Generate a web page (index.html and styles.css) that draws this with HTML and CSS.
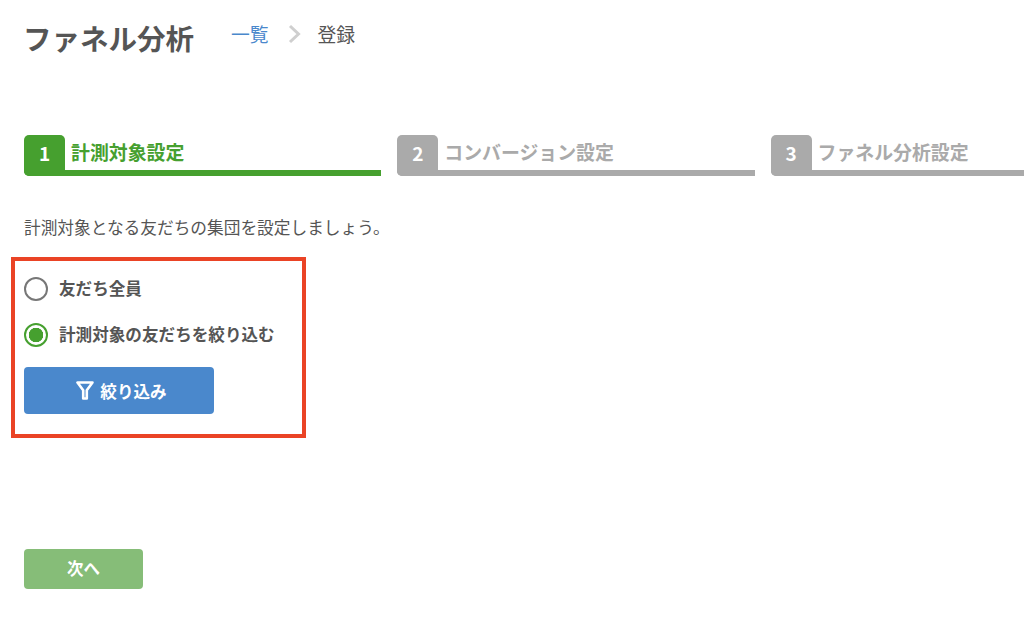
FILE: index.html
```html
<!DOCTYPE html>
<html lang="ja">
<head>
    <meta charset="UTF-8">
    <meta name="viewport" content="width=device-width, initial-scale=1.0">
    <title>ファネル分析</title>
    <link rel="stylesheet" href="styles.css">
</head>
<body>

<div class="container">
    <div class="header">
        <h1>ファネル分析</h1>
        <div class="breadcrumb">
            <a href="#">一覧</a>
            <svg class="chevron" width="13" height="20" viewBox="0 0 13 20"><path d="M2 2l8.5 8L2 18" fill="none" stroke="#cfcfcf" stroke-width="3"/></svg>
            <span>登録</span>
        </div>
    </div>

    <!-- ステップ -->
    <div class="steps">
        <div class="step active"><span class="step-num">1</span><span class="step-label">計測対象設定</span></div>
        <div class="step"><span class="step-num">2</span><span class="step-label">コンバージョン設定</span></div>
        <div class="step"><span class="step-num">3</span><span class="step-label">ファネル分析設定</span></div>
    </div>

    <p class="lead">計測対象となる友だちの集団を設定しましょう。</p>

    <div class="target-box">
        <label class="radio"><span class="radio-mark"></span>友だち全員</label>
        <label class="radio checked"><span class="radio-mark"></span>計測対象の友だちを絞り込む</label>
        <button class="btn-filter" type="button">
            <svg width="18" height="19" viewBox="0 0 18 19"><path d="M1.5 1.5h15L10.8 9.2v8.3H7.2V9.2z" fill="none" stroke="#fff" stroke-width="2.6" stroke-linejoin="round"/></svg>
            絞り込み
        </button>
    </div>

    <button class="btn-next" type="button">次へ</button>
</div>

</body>
</html>
```

FILE: styles.css
```css
html, body {
    margin: 0;
    padding: 0;
    height: 100%;
    overflow: hidden;
    background-color: #fff;
}
body {
    font-family: "Noto Sans CJK JP", "Noto Sans", sans-serif;
    color: #555;
}
.container {
    padding: 0 0 0 24px;
}
.header {
    display: flex;
    align-items: flex-start;
    height: 135px;
}
.header h1 {
    margin: 17px 0 0 -1px;
    font-size: 28.5px;
    line-height: 42px;
    font-weight: 700;
    color: #555;
}
.breadcrumb {
    display: flex;
    align-items: center;
    margin: 20px 0 0 37px;
    font-size: 18.8px;
    line-height: 28px;
}
.breadcrumb a {
    color: #4a88cc;
    text-decoration: none;
}
.breadcrumb .chevron {
    margin: 0 17px 0 19px;
}
.steps {
    display: flex;
    gap: 16px;
    overflow: hidden;
}
.step {
    flex: 0 0 357.25px;
    height: 41px;
    display: flex;
    align-items: flex-start;
    box-sizing: border-box;
    border-bottom: 6px solid #aaa;
    border-bottom-left-radius: 5px;
    color: #aaa;
}
.step-num {
    width: 41px;
    height: 41px;
    flex: none;
    background-color: #aaa;
    color: #fff;
    border-radius: 5px 5px 0 5px;
    font-size: 19px;
    font-weight: 700;
    line-height: 35px;
    text-align: center;
}
.step-label {
    margin-left: 6px;
    font-size: 18.9px;
    font-weight: 700;
    line-height: 34px;
}
.step.active {
    border-bottom-color: #46a02f;
    color: #46a02f;
}
.step.active .step-num {
    background-color: #46a02f;
}
.lead {
    margin: 38px 0 0;
    font-size: 16.7px;
    line-height: 26px;
}
.target-box {
    box-sizing: border-box;
    width: 295px;
    height: 181px;
    margin: 17px 0 0 -13px;
    padding: 16px 0 0 9px;
    border: 4px solid #ea4325;
}
.radio {
    display: flex;
    align-items: flex-start;
    height: 24px;
    margin-bottom: 21.5px;
    font-size: 16.6px;
    line-height: 22px;
    font-weight: 700;
}
.radio-mark {
    box-sizing: border-box;
    width: 24px;
    height: 24px;
    margin-right: 11px;
    border: 2px solid #777;
    border-radius: 50%;
    background-color: #fff;
}
.radio.checked .radio-mark {
    border-color: #46a02f;
    background: radial-gradient(circle, #46a02f 0, #46a02f 7px, #fff 7.5px);
}
.btn-filter, .btn-next {
    display: flex;
    align-items: center;
    justify-content: center;
    border: none;
    color: #fff;
    font-family: inherit;
    font-weight: 700;
    padding: 0;
}
.btn-filter {
    gap: 6px;
    width: 190px;
    height: 47px;
    margin-top: -1px;
    padding-left: 5px;
    background-color: #4a88cc;
    border-radius: 4px;
    font-size: 16.6px;
}
.btn-next {
    width: 119px;
    height: 40px;
    margin-top: 111px;
    padding-bottom: 2px;
    background-color: #86bd78;
    border-radius: 4px;
    font-size: 16.5px;
}
```
